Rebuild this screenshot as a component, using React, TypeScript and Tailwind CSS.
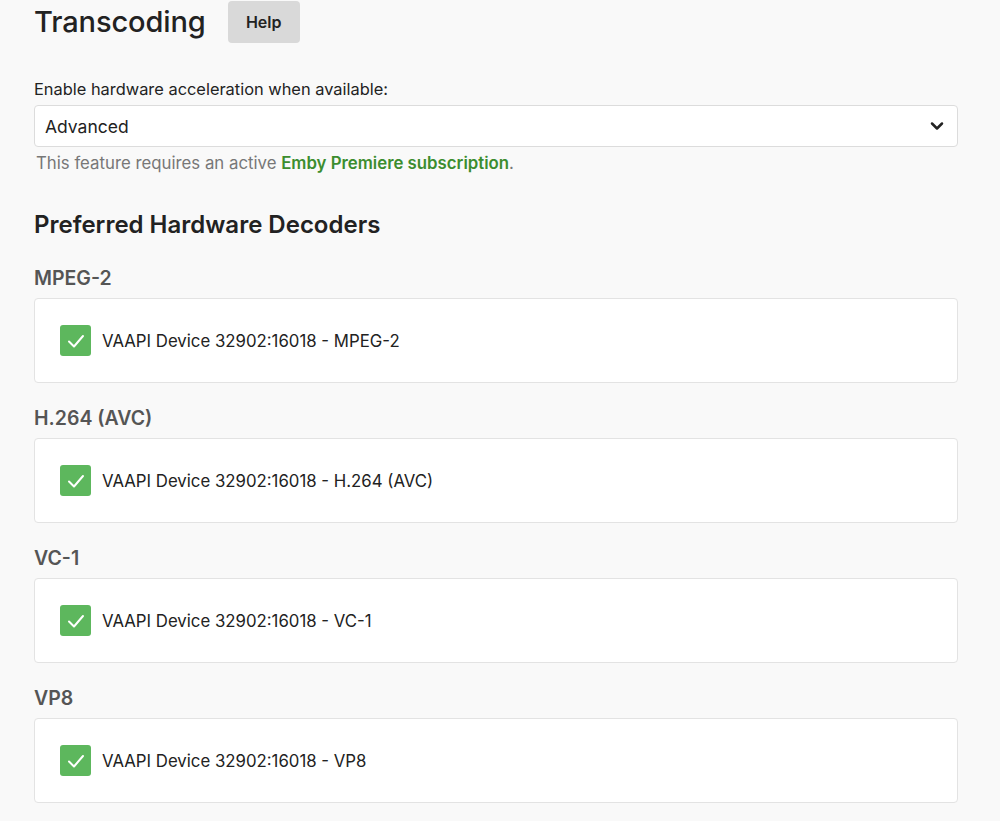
import { ChevronDown } from "lucide-react";

const decoders = [
  { codec: "MPEG-2", device: "VAAPI Device 32902:16018 - MPEG-2" },
  { codec: "H.264 (AVC)", device: "VAAPI Device 32902:16018 - H.264 (AVC)" },
  { codec: "VC-1", device: "VAAPI Device 32902:16018 - VC-1" },
  { codec: "VP8", device: "VAAPI Device 32902:16018 - VP8" },
];

function CheckBox() {
  return (
    <span className="flex h-[31px] w-[31px] shrink-0 items-center justify-center rounded-[3px] bg-[#5db75d]">
      <svg width="22" height="22" viewBox="0 0 22 22" fill="none">
        <path
          d="M4 11.5 L9 16.5 L18 6"
          stroke="white"
          strokeWidth="2"
          strokeLinecap="round"
          strokeLinejoin="round"
        />
      </svg>
    </span>
  );
}

export default function App() {
  return (
    <div className="min-h-[821px] bg-[#f9f9f9] px-[34px] font-['Inter',sans-serif] text-[#222]">
      <div className="flex items-center gap-[22px] pt-[1px]">
        <h1 className="text-[29px] font-medium leading-[36px] tracking-[-0.1px]">Transcoding</h1>
        <button className="h-[42px] w-[72px] rounded-[4px] bg-[#d9d9d9] text-[16px] font-semibold text-[#222]">
          Help
        </button>
      </div>

      <div className="mt-[34px] text-[16.4px] leading-[24px] text-[#222]">
        Enable hardware acceleration when available:
      </div>
      <div className="mt-[4px] flex h-[42px] w-[924px] items-center justify-between rounded-[4px] border border-[#dcdcdc] bg-white pl-[10px] pr-[10px]">
        <span className="mt-[2px] text-[17.5px] text-[#222]">Advanced</span>
        <ChevronDown size={20} strokeWidth={3} className="text-[#222]" />
      </div>
      <div className="mt-[4px] pl-[2px] text-[16.8px] leading-[24px] text-[#777]">
        This feature requires an active{" "}
        <span className="font-semibold text-[#3c8d2f]">Emby Premiere subscription</span>.
      </div>

      <h2 className="mt-[35px] text-[24px] font-semibold leading-[30px] text-[#222]">
        Preferred Hardware Decoders
      </h2>

      <div className="mt-[27px] flex flex-col gap-[24px]">
        {decoders.map((d) => (
          <div key={d.codec}>
            <div className="text-[19.5px] font-semibold leading-[22px] text-[#555]">{d.codec}</div>
            <div className="mt-[9px] flex h-[85px] w-[924px] items-center gap-[11px] rounded-[4px] border border-[#e3e3e3] bg-white pl-[25px]">
              <CheckBox />
              <span className="mt-[3px] text-[16.8px] text-[#222]">{d.device}</span>
            </div>
          </div>
        ))}
      </div>
    </div>
  );
}
